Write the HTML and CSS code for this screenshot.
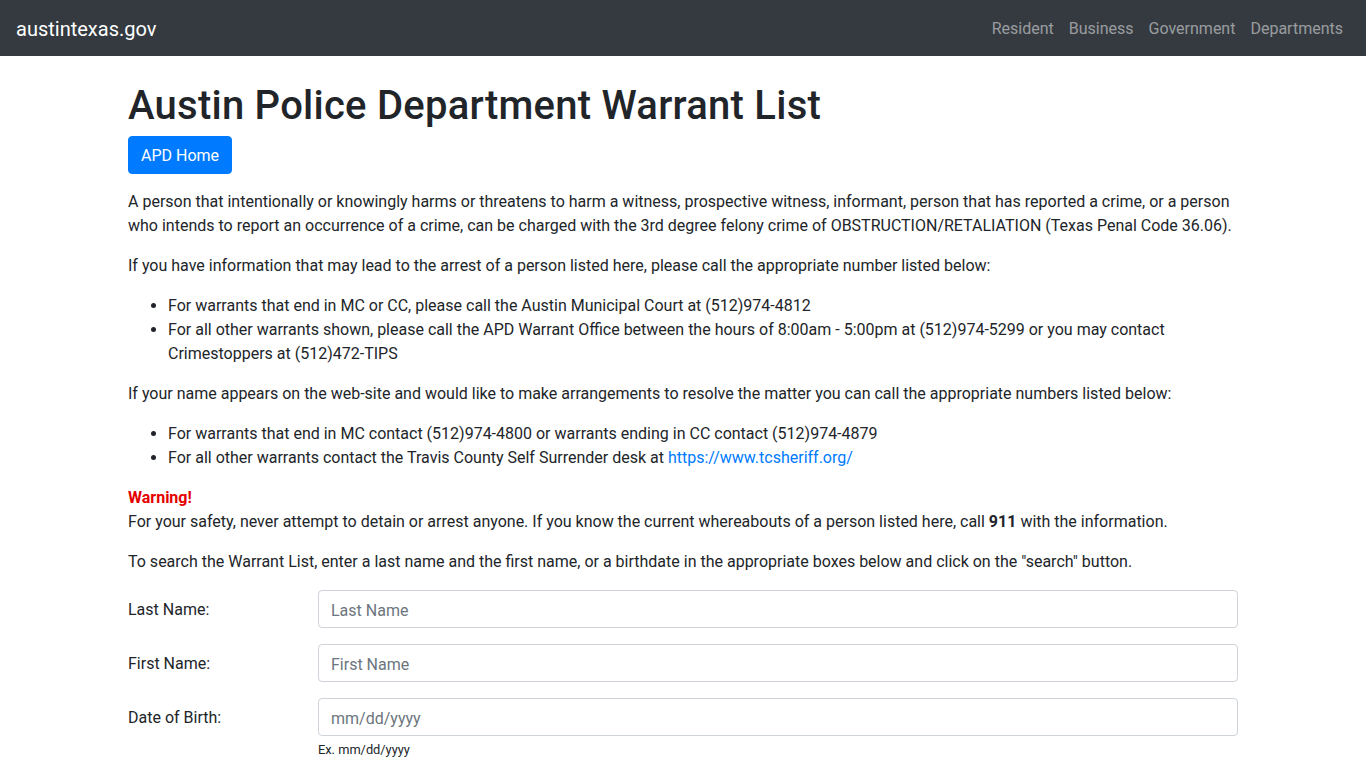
FILE: index.html
```html
<!DOCTYPE html>
<html lang="en">
<head>
    <meta charset="UTF-8">
    <meta name="viewport" content="width=device-width, initial-scale=1.0">
    <title>Austin Police Department Warrant List</title>
    <link rel="stylesheet" href="styles.css">
</head>
<body>
    <nav class="navbar">
        <a class="brand" href="#">austintexas.gov</a>
        <ul class="nav-links">
            <li><a href="#">Resident</a></li>
            <li><a href="#">Business</a></li>
            <li><a href="#">Government</a></li>
            <li><a href="#">Departments</a></li>
        </ul>
    </nav>

    <main class="container">
        <h1>Austin Police Department Warrant List</h1>
        <a class="btn" href="#">APD Home</a>

        <p>A person that intentionally or knowingly harms or threatens to harm a witness, prospective witness, informant, person that has reported a crime, or a person who intends to report an occurrence of a crime, can be charged with the 3rd degree felony crime of OBSTRUCTION/RETALIATION (Texas Penal Code 36.06).</p>

        <p>If you have information that may lead to the arrest of a person listed here, please call the appropriate number listed below:</p>
        <ul>
            <li>For warrants that end in MC or CC, please call the Austin Municipal Court at (512)974-4812</li>
            <li>For all other warrants shown, please call the APD Warrant Office between the hours of 8:00am - 5:00pm at (512)974-5299 or you may contact Crimestoppers at (512)472-TIPS</li>
        </ul>

        <p>If your name appears on the web-site and would like to make arrangements to resolve the matter you can call the appropriate numbers listed below:</p>
        <ul>
            <li>For warrants that end in MC contact (512)974-4800 or warrants ending in CC contact (512)974-4879</li>
            <li>For all other warrants contact the Travis County Self Surrender desk at <a href="#">https://www.tcsheriff.org/</a></li>
        </ul>

        <p><strong class="warning">Warning!</strong><br>
        For your safety, never attempt to detain or arrest anyone. If you know the current whereabouts of a person listed here, call <strong>911</strong> with the information.</p>

        <p>To search the Warrant List, enter a last name and the first name, or a birthdate in the appropriate boxes below and click on the "search" button.</p>

        <form class="search-form">
            <div class="form-row">
                <label for="lastName">Last Name:</label>
                <div class="field">
                    <input type="text" id="lastName" placeholder="Last Name">
                </div>
            </div>
            <div class="form-row">
                <label for="firstName">First Name:</label>
                <div class="field">
                    <input type="text" id="firstName" placeholder="First Name">
                </div>
            </div>
            <div class="form-row">
                <label for="dob">Date of Birth:</label>
                <div class="field">
                    <input type="text" id="dob" placeholder="mm/dd/yyyy">
                    <small class="hint">Ex. mm/dd/yyyy</small>
                </div>
            </div>
        </form>
    </main>
</body>
</html>
```

FILE: styles.css
```css
* {
    box-sizing: border-box;
}
body {
    margin: 0;
    font-family: Roboto, "Noto Sans", Arial, sans-serif;
    font-size: 16px;
    line-height: 1.5;
    color: #212529;
    background-color: #fff;
}
a {
    color: #007bff;
    text-decoration: none;
}

/* barra superior */
.navbar {
    display: flex;
    align-items: center;
    justify-content: space-between;
    height: 56px;
    padding: 9px 16px 7px;
    background-color: #343a40;
}
.brand {
    color: #fff;
    font-size: 20px;
    line-height: 30px;
    padding: 5px 0;
}
.nav-links {
    display: flex;
    list-style: none;
    margin: 0;
    padding: 0;
}
.nav-links a {
    display: block;
    padding: 8px 7px 8px 8px;
    color: rgba(255, 255, 255, 0.5);
}

/* contenido */
.container {
    width: 1140px;
    margin: 24px auto 0;
    padding: 0 15px;
}
h1 {
    margin: 0 0 6px;
    padding-top: 2px;
    font-size: 40px;
    font-weight: 500;
    line-height: 1.2;
    letter-spacing: 0.25px;
}
.btn {
    display: inline-block;
    margin-bottom: 16px;
    padding: 7px 12px 5px;
    border: 1px solid #007bff;
    border-radius: 4px;
    background-color: #007bff;
    color: #fff;
    line-height: 24px;
}
p {
    margin: 0 0 16px;
}
ul {
    margin: 0 0 16px;
    padding-left: 40px;
}
.warning {
    color: #e50000;
}
strong {
    font-weight: bold;
}

/* formulario */
.form-row {
    display: grid;
    grid-template-columns: 190px 1fr;
    margin: 0 -15px 16px;
}
.form-row label {
    padding: 8px 15px 0;
    line-height: 24px;
}
.field {
    padding: 0 15px;
}
.field input {
    display: block;
    width: 100%;
    height: 38px;
    padding: 7px 12px 5px;
    font: inherit;
    color: #495057;
    border: 1px solid #ced4da;
    border-radius: 4px;
}
.field input::placeholder {
    color: #6c757d;
}
.hint {
    display: block;
    margin-top: 4px;
    font-size: 12.8px;
    color: #212529;
}
```
